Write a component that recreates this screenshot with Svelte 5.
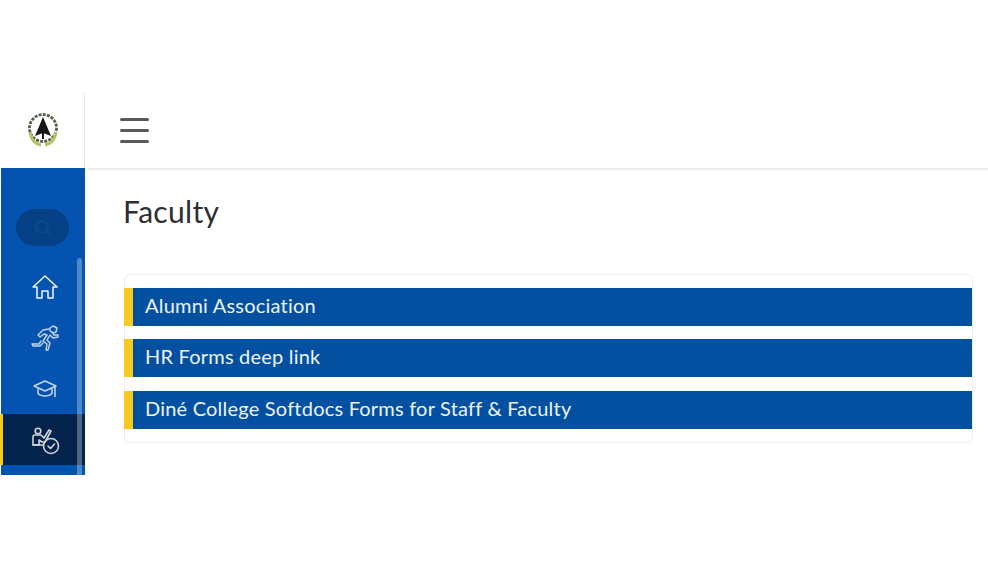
<script lang="ts">
  const links = [
    "Alumni Association",
    "HR Forms deep link",
    "Diné College Softdocs Forms for Staff & Faculty",
  ];
</script>

<div class="app">
  <aside class="side">
    <div class="logo">
      <svg width="36" height="38" viewBox="0 0 36 38" fill="none">
        <circle cx="18" cy="16" r="13.500" stroke="#55604a" stroke-width="2.800" stroke-dasharray="3 1.200" />
        <path d="M5 20c1 8 6 12 11 13M31 20c-1 8-6 12-11 13" stroke="#b9c068" stroke-width="3" />
        <path d="M18 5l8 19-8-3-8 3z" fill="#141618" />
        <path d="M18 21v6" stroke="#141618" stroke-width="2" />
      </svg>
    </div>
    <nav class="nav">
      <div class="search">
        <svg width="20" height="20" viewBox="0 0 20 20" fill="none" stroke="#0a4a8c" stroke-width="2">
          <circle cx="9" cy="9" r="6" />
          <path d="M13.500 13.500L18 18" />
        </svg>
      </div>
      <a class="item" href="#home" aria-label="Home">
        <svg width="28" height="26" viewBox="0 0 28 26" fill="none" stroke="#f2f6fb" stroke-width="1.500" stroke-linejoin="round">
          <path d="M2 13L14 2l12 11h-4v11h-5v-7h-6v7H6V13z" />
        </svg>
      </a>
      <a class="item" href="#run" aria-label="Activities">
        <svg width="28" height="28" viewBox="0 0 28 28" fill="none" stroke="#c4d6ec" stroke-width="1.400" stroke-linejoin="round" stroke-linecap="round">
          <path d="M19 4l3-2 4 2-1 4-3 1-3-2z" />
          <path d="M18 5l-6 1-5 5 2 2 4-3 3 1-4 6 4 3-1 6 2 0 2-7-3-3 3-5 3 3 5-1 0-2-4 0-2-3" />
          <path d="M10 17l-2 3H1l1 2h7l3-3" />
        </svg>
      </a>
      <a class="item" href="#grad" aria-label="Academics">
        <svg width="24" height="20" viewBox="0 0 24 20" fill="none" stroke="#c4d6ec" stroke-width="1.500" stroke-linejoin="round">
          <path d="M1 7l11-5 11 5-11 5z" />
          <path d="M5 9.500v5c2 2 5 2.500 7 2.500s5-.5 7-2.500v-5" />
          <path d="M22 8v10" />
        </svg>
      </a>
      <a class="item active" href="#tasks" aria-label="Tasks">
        <svg width="30" height="30" viewBox="0 0 30 30" fill="none" stroke="#d2d6dc" stroke-width="1.600" stroke-linejoin="round" stroke-linecap="round">
          <circle cx="7" cy="5" r="2.800" />
          <path d="M2 19v-8c0-1.500 1-2 2-2h6l3 3 5-8 2 1-6 11h-3l-3-2v5z" />
          <path d="M2 19h10" />
          <circle cx="20" cy="20" r="7.500" />
          <path d="M17 20l2.500 2.500 4-4.500" />
        </svg>
      </a>
      <div class="track"></div>
    </nav>
  </aside>

  <div class="main">
    <header class="top">
      <div class="burger"><span></span><span></span><span></span></div>
    </header>
    <section class="content">
      <h1>Faculty</h1>
      <div class="card">
        {#each links as link}
          <a class="row" href="#link">{link}</a>
        {/each}
      </div>
    </section>
  </div>
</div>

<style>
  :global(body) { background: #fff; }
  .app { display: flex; padding: 93px 15px 0 1px; height: 495px; overflow: hidden; font-family: Lato, "Open Sans", sans-serif; color: #2b2d30; }
  .side { width: 84px; flex: none; display: flex; flex-direction: column; }
  .logo { height: 75px; display: flex; align-items: center; justify-content: center; background: #fff; border-right: 1px solid #eaeaea; box-sizing: border-box; padding-left: 1px; }
  .nav { position: relative; height: 307px; background: #0553b1; display: flex; flex-direction: column; }
  .search { width: 53px; height: 37px; margin: 41px 0 0 15px; border-radius: 19px; background: #053f85; display: flex; align-items: center; justify-content: center; }
  .item { display: flex; height: 51px; align-items: center; justify-content: center; padding-left: 4px; box-sizing: border-box; }
  .item:first-of-type { margin-top: 15px; }
  .active { background: #04234c; border-left: 3px solid #f9c91f; margin-left: -1px; padding: 2px 0 0 4px; }
  .track { position: absolute; top: 90px; right: 3px; bottom: 0; width: 5px; background: rgba(255, 255, 255, 0.3); border-radius: 3px 3px 0 0; }
  .main { flex: 1; min-width: 0; }
  .top { height: 75px; margin-right: -20px; display: flex; align-items: center; padding-left: 35px; box-shadow: 0 3px 4px -2px rgba(0, 0, 0, 0.14); }
  .burger { width: 29px; display: flex; flex-direction: column; gap: 8px; }
  .burger span { display: block; height: 3px; background: #58595b; border-radius: 2px; }
  .content { padding: 25px 0 0 39px; }
  h1 { margin: 0 0 44px -1px; font-size: 30px; line-height: 37px; font-weight: 400; letter-spacing: 0.3px; color: #2d2f33; }
  .card { display: flex; flex-direction: column; gap: 13px; padding: 13px 0; border: 1px solid #eeeeee; border-radius: 6px; height: 169px; box-sizing: border-box; }
  .row { display: block; height: 38px; line-height: 35px; background: #02509f; border-left: 9px solid #f9c91f; padding-left: 12px; color: #eef3fa; font-size: 20px; letter-spacing: 0.21px; text-decoration: none; margin-left: -1px; }
  .row:last-child { margin-top: 1px; }
</style>
